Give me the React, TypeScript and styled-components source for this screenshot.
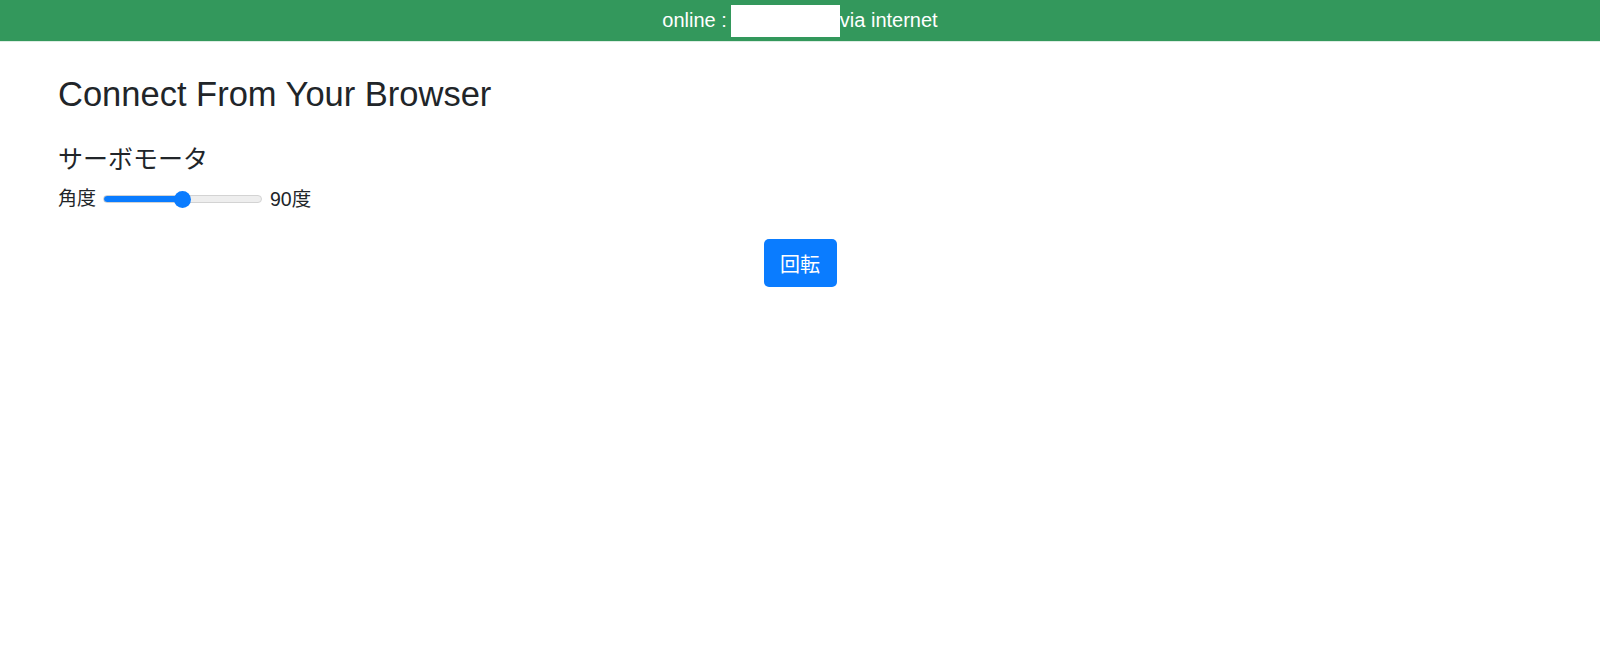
import styled, { createGlobalStyle } from 'styled-components'
import { useState } from 'react'

const GlobalStyle = createGlobalStyle`
    html, body {
        margin: 0;
        padding: 0;
        background: #FFFFFF;
    }
    body {
        font-family: "Liberation Sans", "Noto Sans CJK JP", sans-serif;
        color: #212529;
    }
`

const StatusBar = styled.div`
    height: 41px;
    background-color: #33985C;
    border-bottom: 1px solid #DDEDE3;
    display: flex;
    align-items: center;
    justify-content: center;
    color: #FFFFFF;
    font-size: 20px;
`
const AddressBox = styled.span`
    display: inline-block;
    width: 109px;
    height: 32px;
    margin-left: 4px;
    background: #FFFFFF;
`

const Main = styled.main`
    padding: 33px 58px 0;
`
const Titulo = styled.h2`
    margin: 0 0 31px;
    font-size: 34.5px;
    line-height: 1.12;
    font-weight: 400;
`
const Subtitulo = styled.h4`
    margin: 0 0 14px;
    font-size: 25px;
    line-height: 1.15;
    font-weight: 400;
`
const SliderRow = styled.div`
    display: flex;
    align-items: center;
    gap: 7px;
    font-size: 19px;
    line-height: 24px;
`
const Range = styled.input`
    -webkit-appearance: none;
    appearance: none;
    width: 159px;
    height: 8px;
    margin: 0 1px 0 0;
    border-radius: 4px;
    border: 1px solid #D3D3D3;
    box-sizing: border-box;
    outline: none;

    &::-webkit-slider-thumb {
        -webkit-appearance: none;
        width: 17px;
        height: 17px;
        border-radius: 50%;
        background: #0A7CFF;
        border: none;
        cursor: pointer;
    }
`
const Valor = styled.span`
    font-size: 19.5px;
`
const BotaoLinha = styled.div`
    display: flex;
    justify-content: center;
    margin-top: 28px;
`
const Botao = styled.button`
    width: 73px;
    height: 48px;
    background-color: #0A7CFF;
    color: #FFFFFF;
    border: none;
    border-radius: 5px;
    font-family: "Liberation Sans", "Noto Sans CJK JP", sans-serif;
    font-size: 20px;
    cursor: pointer;
`

export default function App () {
    const [angulo, setAngulo] = useState(90)
    const pct = (angulo / 180) * 100
    return (<>
        <GlobalStyle />
        <StatusBar>
            online :<AddressBox />via internet
        </StatusBar>
        <Main>
            <Titulo>Connect From Your Browser</Titulo>
            <Subtitulo>サーボモータ</Subtitulo>
            <SliderRow>
                <span>角度</span>
                <Range
                    type="range"
                    min={0}
                    max={180}
                    value={angulo}
                    onChange={e => setAngulo(Number(e.target.value))}
                    style={{ background: `linear-gradient(to right, #0A7CFF 0%, #0A7CFF ${pct}%, #EEEEEE ${pct}%, #EEEEEE 100%)` }}
                />
                <Valor>{angulo}度</Valor>
            </SliderRow>
            <BotaoLinha>
                <Botao>回転</Botao>
            </BotaoLinha>
        </Main>
    </>)
}
